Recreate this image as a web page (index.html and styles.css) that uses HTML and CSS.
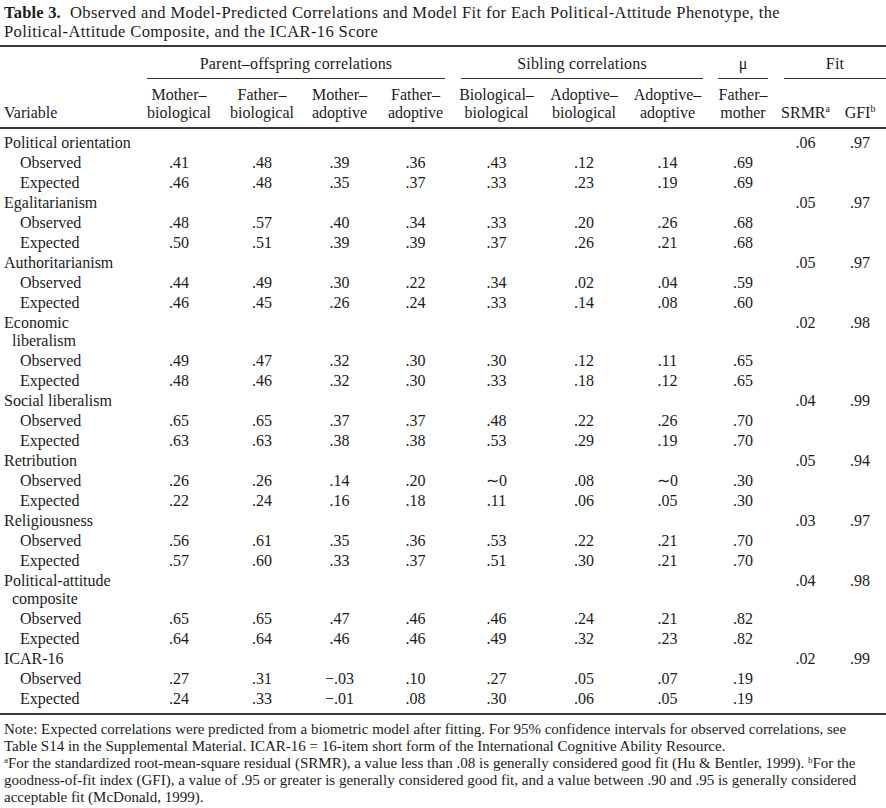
FILE: index.html
```html
<!DOCTYPE html>
<html lang="en">
<head>
<meta charset="utf-8">
<title>Table 3</title>
<link rel="stylesheet" href="styles.css">
</head>
<body>
<div class="page">
  <p class="caption"><b>Table 3.</b>&nbsp; Observed and Model-Predicted Correlations and Model Fit for Each Political-Attitude Phenotype, the<br>Political-Attitude Composite, and the ICAR-16 Score</p>
  <table class="data">
    <colgroup>
      <col class="w-var">
      <col class="w-c1"><col class="w-c2"><col class="w-c3"><col class="w-c4">
      <col class="w-c5"><col class="w-c6"><col class="w-c7">
      <col class="w-c8">
      <col class="w-c9"><col class="w-c10">
    </colgroup>
    <thead>
      <tr class="group-row">
        <th></th>
        <th colspan="4" class="grp grp-po"><div class="grp-label">Parent–offspring correlations</div></th>
        <th colspan="3" class="grp grp-sib"><div class="grp-label">Sibling correlations</div></th>
        <th class="grp grp-mu"><div class="grp-label">μ</div></th>
        <th colspan="2" class="grp grp-fit"><div class="grp-label">Fit</div></th>
      </tr>
      <tr class="sub-row">
        <th class="var-head">Variable</th>
        <th class="c1">Mother–<br>biological</th>
        <th class="c2">Father–<br>biological</th>
        <th class="c3">Mother–<br>adoptive</th>
        <th class="c4">Father–<br>adoptive</th>
        <th class="c5">Biological–<br>biological</th>
        <th class="c6">Adoptive–<br>biological</th>
        <th class="c7">Adoptive–<br>adoptive</th>
        <th class="c8">Father–<br>mother</th>
        <th class="c9">SRMR<sup>a</sup></th>
        <th class="c10">GFI<sup>b</sup></th>
      </tr>
    </thead>
    <tbody>
      <tr class="var-row first"><td class="var">Political orientation</td><td></td><td></td><td></td><td></td><td></td><td></td><td></td><td></td><td class="c9">.06</td><td class="c10">.97</td></tr>
      <tr><td class="sub">Observed</td><td class="c1">.41</td><td class="c2">.48</td><td class="c3">.39</td><td class="c4">.36</td><td class="c5">.43</td><td class="c6">.12</td><td class="c7">.14</td><td class="c8">.69</td><td></td><td></td></tr>
      <tr><td class="sub">Expected</td><td class="c1">.46</td><td class="c2">.48</td><td class="c3">.35</td><td class="c4">.37</td><td class="c5">.33</td><td class="c6">.23</td><td class="c7">.19</td><td class="c8">.69</td><td></td><td></td></tr>

      <tr class="var-row"><td class="var">Egalitarianism</td><td></td><td></td><td></td><td></td><td></td><td></td><td></td><td></td><td class="c9">.05</td><td class="c10">.97</td></tr>
      <tr><td class="sub">Observed</td><td class="c1">.48</td><td class="c2">.57</td><td class="c3">.40</td><td class="c4">.34</td><td class="c5">.33</td><td class="c6">.20</td><td class="c7">.26</td><td class="c8">.68</td><td></td><td></td></tr>
      <tr><td class="sub">Expected</td><td class="c1">.50</td><td class="c2">.51</td><td class="c3">.39</td><td class="c4">.39</td><td class="c5">.37</td><td class="c6">.26</td><td class="c7">.21</td><td class="c8">.68</td><td></td><td></td></tr>

      <tr class="var-row"><td class="var">Authoritarianism</td><td></td><td></td><td></td><td></td><td></td><td></td><td></td><td></td><td class="c9">.05</td><td class="c10">.97</td></tr>
      <tr><td class="sub">Observed</td><td class="c1">.44</td><td class="c2">.49</td><td class="c3">.30</td><td class="c4">.22</td><td class="c5">.34</td><td class="c6">.02</td><td class="c7">.04</td><td class="c8">.59</td><td></td><td></td></tr>
      <tr><td class="sub">Expected</td><td class="c1">.46</td><td class="c2">.45</td><td class="c3">.26</td><td class="c4">.24</td><td class="c5">.33</td><td class="c6">.14</td><td class="c7">.08</td><td class="c8">.60</td><td></td><td></td></tr>

      <tr class="var-row"><td class="var">Economic<br>liberalism</td><td></td><td></td><td></td><td></td><td></td><td></td><td></td><td></td><td class="c9">.02</td><td class="c10">.98</td></tr>
      <tr><td class="sub">Observed</td><td class="c1">.49</td><td class="c2">.47</td><td class="c3">.32</td><td class="c4">.30</td><td class="c5">.30</td><td class="c6">.12</td><td class="c7">.11</td><td class="c8">.65</td><td></td><td></td></tr>
      <tr><td class="sub">Expected</td><td class="c1">.48</td><td class="c2">.46</td><td class="c3">.32</td><td class="c4">.30</td><td class="c5">.33</td><td class="c6">.18</td><td class="c7">.12</td><td class="c8">.65</td><td></td><td></td></tr>

      <tr class="var-row"><td class="var">Social liberalism</td><td></td><td></td><td></td><td></td><td></td><td></td><td></td><td></td><td class="c9">.04</td><td class="c10">.99</td></tr>
      <tr><td class="sub">Observed</td><td class="c1">.65</td><td class="c2">.65</td><td class="c3">.37</td><td class="c4">.37</td><td class="c5">.48</td><td class="c6">.22</td><td class="c7">.26</td><td class="c8">.70</td><td></td><td></td></tr>
      <tr><td class="sub">Expected</td><td class="c1">.63</td><td class="c2">.63</td><td class="c3">.38</td><td class="c4">.38</td><td class="c5">.53</td><td class="c6">.29</td><td class="c7">.19</td><td class="c8">.70</td><td></td><td></td></tr>

      <tr class="var-row"><td class="var">Retribution</td><td></td><td></td><td></td><td></td><td></td><td></td><td></td><td></td><td class="c9">.05</td><td class="c10">.94</td></tr>
      <tr><td class="sub">Observed</td><td class="c1">.26</td><td class="c2">.26</td><td class="c3">.14</td><td class="c4">.20</td><td class="c5">∼0</td><td class="c6">.08</td><td class="c7">∼0</td><td class="c8">.30</td><td></td><td></td></tr>
      <tr><td class="sub">Expected</td><td class="c1">.22</td><td class="c2">.24</td><td class="c3">.16</td><td class="c4">.18</td><td class="c5">.11</td><td class="c6">.06</td><td class="c7">.05</td><td class="c8">.30</td><td></td><td></td></tr>

      <tr class="var-row"><td class="var">Religiousness</td><td></td><td></td><td></td><td></td><td></td><td></td><td></td><td></td><td class="c9">.03</td><td class="c10">.97</td></tr>
      <tr><td class="sub">Observed</td><td class="c1">.56</td><td class="c2">.61</td><td class="c3">.35</td><td class="c4">.36</td><td class="c5">.53</td><td class="c6">.22</td><td class="c7">.21</td><td class="c8">.70</td><td></td><td></td></tr>
      <tr><td class="sub">Expected</td><td class="c1">.57</td><td class="c2">.60</td><td class="c3">.33</td><td class="c4">.37</td><td class="c5">.51</td><td class="c6">.30</td><td class="c7">.21</td><td class="c8">.70</td><td></td><td></td></tr>

      <tr class="var-row"><td class="var">Political-attitude<br>composite</td><td></td><td></td><td></td><td></td><td></td><td></td><td></td><td></td><td class="c9">.04</td><td class="c10">.98</td></tr>
      <tr><td class="sub">Observed</td><td class="c1">.65</td><td class="c2">.65</td><td class="c3">.47</td><td class="c4">.46</td><td class="c5">.46</td><td class="c6">.24</td><td class="c7">.21</td><td class="c8">.82</td><td></td><td></td></tr>
      <tr><td class="sub">Expected</td><td class="c1">.64</td><td class="c2">.64</td><td class="c3">.46</td><td class="c4">.46</td><td class="c5">.49</td><td class="c6">.32</td><td class="c7">.23</td><td class="c8">.82</td><td></td><td></td></tr>

      <tr class="var-row"><td class="var">ICAR-16</td><td></td><td></td><td></td><td></td><td></td><td></td><td></td><td></td><td class="c9">.02</td><td class="c10">.99</td></tr>
      <tr><td class="sub">Observed</td><td class="c1">.27</td><td class="c2">.31</td><td class="c3">−.03</td><td class="c4">.10</td><td class="c5">.27</td><td class="c6">.05</td><td class="c7">.07</td><td class="c8">.19</td><td></td><td></td></tr>
      <tr class="last"><td class="sub">Expected</td><td class="c1">.24</td><td class="c2">.33</td><td class="c3">−.01</td><td class="c4">.08</td><td class="c5">.30</td><td class="c6">.06</td><td class="c7">.05</td><td class="c8">.19</td><td></td><td></td></tr>
    </tbody>
  </table>
  <div class="notes">
    <p class="note">Note: Expected correlations were predicted from a biometric model after fitting. For 95% confidence intervals for observed correlations, see<br>Table S14 in the Supplemental Material. ICAR-16 = 16-item short form of the International Cognitive Ability Resource.</p>
    <p class="note"><sup>a</sup>For the standardized root-mean-square residual (SRMR), a value less than .08 is generally considered good fit (Hu &amp; Bentler, 1999). <sup>b</sup>For the<br>goodness-of-fit index (GFI), a value of .95 or greater is generally considered good fit, and a value between .90 and .95 is generally considered<br>acceptable fit (McDonald, 1999).</p>
  </div>
</div>
</body>
</html>
```

FILE: styles.css
```css
html, body {
  margin: 0;
  padding: 0;
  background: #ffffff;
}

body {
  font-family: "Liberation Serif", "Times New Roman", serif;
  color: #1b1b1b;
  width: 886px;
}

.page {
  width: 886px;
}

.caption {
  margin: 0;
  padding: 3px 0 0 4px;
  font-size: 16.5px;
  letter-spacing: 0.4px;
  line-height: 19px;
  height: 47px;
  box-sizing: border-box;
  border-bottom: 2px solid #3a3a3a;
  white-space: nowrap;
}

.caption b {
  font-weight: bold;
  letter-spacing: 0.2px;
}

.data {
  width: 886px;
  border-collapse: collapse;
  table-layout: fixed;
  font-size: 16px;
  line-height: 18px;
}

.w-var { width: 147px; }
.w-c1 { width: 73px; }
.w-c2 { width: 81px; }
.w-c3 { width: 77px; }
.w-c4 { width: 75px; }
.w-c5 { width: 87px; }
.w-c6 { width: 85px; }
.w-c7 { width: 85px; }
.w-c8 { width: 66px; }
.w-c9 { width: 57px; }
.w-c10 { width: 53px; }

.data th {
  font-weight: normal;
  padding: 0;
  text-align: center;
}

.data td {
  padding: 1px 0;
  text-align: center;
  vertical-align: top;
  white-space: nowrap;
}

/* group header row */
.group-row th {
  padding-top: 8px;
  vertical-align: bottom;
}

.grp-label {
  border-bottom: 1px solid #333;
  padding-bottom: 5px;
  letter-spacing: 0.2px;
}

.data .group-row th.grp-po { padding: 8px 8px 0 0; }
.data .group-row th.grp-sib { padding: 8px 7px 0 8px; }
.data .group-row th.grp-mu { padding: 8px 8px 0 8px; }
.data .group-row th.grp-fit { padding: 8px 0 0 8px; }

/* sub header row */
.sub-row th {
  padding-top: 7px;
  padding-bottom: 5px;
  vertical-align: bottom;
  border-bottom: 2px solid #3a3a3a;
  white-space: nowrap;
}

.sub-row th.var-head {
  text-align: left;
  padding-left: 4px;
}

sup {
  font-size: 10px;
  line-height: 0;
  vertical-align: 6px;
}

/* column offsets */
.c1 { padding-right: 9px !important; }
.c2 { padding-left: 3px !important; }
.c6 { padding-left: 3px !important; }
.c9 { padding-left: 2px !important; }
.c10 { padding-left: 1px !important; }

/* body */
.var {
  text-align: left !important;
  padding-left: 12px !important;
  text-indent: -8px;
}

.sub {
  text-align: left !important;
  padding-left: 20px !important;
}

.var-row.first td {
  padding-top: 5px;
}

.last td {
  padding-bottom: 5px;
  border-bottom: 2px solid #3a3a3a;
}

/* notes */
.notes {
  padding: 6px 0 0 4px;
}

.note {
  margin: 0;
  font-size: 15px;
  line-height: 17px;
  white-space: nowrap;
}

.note sup {
  font-size: 9px;
  vertical-align: 5px;
}
```
